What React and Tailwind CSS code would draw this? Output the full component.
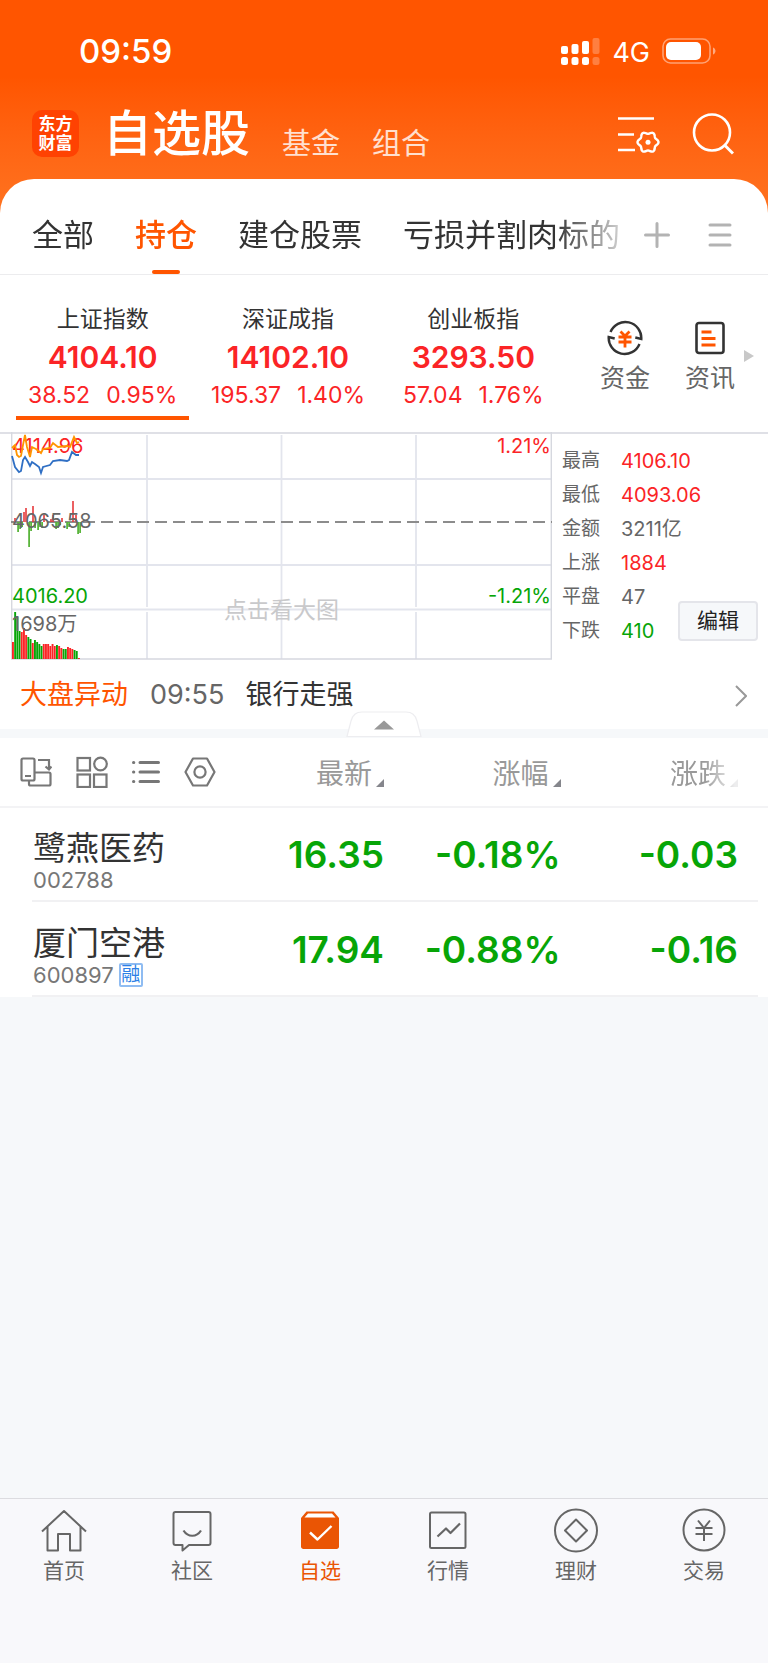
import { useState } from "react";

const indices = [
  { name: "上证指数", value: "4104.10", change: "38.52", percent: "0.95%" },
  { name: "深证成指", value: "14102.10", change: "195.37", percent: "1.40%" },
  { name: "创业板指", value: "3293.50", change: "57.04", percent: "1.76%" },
];

const stats = [
  { label: "最高", value: "4106.10", color: "text-[#fb2426]" },
  { label: "最低", value: "4093.06", color: "text-[#fb2426]" },
  { label: "金额", value: "3211亿", color: "text-[#666]" },
  { label: "上涨", value: "1884", color: "text-[#fb2426]" },
  { label: "平盘", value: "47", color: "text-[#666]" },
  { label: "下跌", value: "410", color: "text-[#07a507]" },
];

const stocks = [
  { name: "鹭燕医药", code: "002788", price: "16.35", percent: "-0.18%", change: "-0.03" },
  { name: "厦门空港", code: "600897", margin: true, price: "17.94", percent: "-0.88%", change: "-0.16" },
];

const groups = ["全部", "持仓", "建仓股票", "亏损并割肉标的"];

// [x, height], drawn up (red) or down (green) from the middle line
const upBars = [[4, 4], [13, 10], [15, 14], [22, 16], [33, 7], [40, 3], [42, 7], [51, 4], [62, 21], [65, 7]];
const downBars = [
  [7, 10], [9, 7], [11, 5], [18, 25], [20, 9], [24, 6], [27, 8], [29, 5],
  [31, 6], [45, 7], [47, 6], [49, 3], [56, 7], [58, 5], [67, 12], [69, 11],
];

const volumes = [
  ["r", 17], ["g", 47], ["g", 42], ["g", 28], ["r", 27], ["r", 31], ["r", 24], ["g", 22],
  ["g", 20], ["r", 16], ["g", 19], ["g", 17], ["g", 15], ["g", 13], ["r", 15], ["r", 15],
  ["r", 15], ["r", 13], ["r", 15], ["r", 13], ["g", 14], ["r", 13], ["r", 11], ["g", 10],
  ["g", 10], ["r", 12], ["r", 11], ["r", 10], ["g", 9], ["g", 8], ["r", 1],
];

/**
 * Builds the outline of the six-lobed gear.
 * @returns A string of polygon points.
 */
const gearPoints = (cx, cy) =>
  Array.from({ length: 72 }, (_, i) => {
    const angle = (i * Math.PI) / 36;
    const radius = 9.4 + 1.1 * Math.cos(6 * angle);
    return `${(cx + radius * Math.cos(angle)).toFixed(2)},${(cy + radius * Math.sin(angle)).toFixed(2)}`;
  }).join(" ");

const StatusBar = () => (
  <div className="flex items-center justify-between h-[102px] pl-[79px] pr-[52px]">
    <span className="text-[33px] leading-10 font-medium">09:59</span>
    <div className="flex items-center gap-3">
      <svg width="39" height="28" viewBox="0 0 39 28" fill="#fff" aria-hidden="true">
        <rect x="0" y="9" width="7" height="8" rx="2" />
        <rect x="10.5" y="7" width="7" height="10" rx="2" />
        <rect x="21" y="4" width="7" height="13" rx="2" />
        <rect x="31.5" y="1" width="7" height="16" rx="2" opacity=".25" />
        <rect x="0" y="20" width="7" height="8" rx="2.5" />
        <rect x="10.5" y="20" width="7" height="8" rx="2.5" />
        <rect x="21" y="20" width="7" height="8" rx="2.5" />
        <rect x="31.5" y="20" width="7" height="8" rx="2.5" opacity=".25" />
      </svg>
      <span className="pt-[3px] text-[27px] leading-8">4G</span>
      <svg width="54" height="26" viewBox="0 0 54 26" fill="none" aria-hidden="true">
        <rect x="1" y="1" width="47" height="24" rx="7.5" stroke="#fff" strokeOpacity=".45" strokeWidth="1.6" />
        <rect x="4" y="4" width="35" height="18" rx="5" fill="#fff" />
        <path d="M51 9.5c1.6.6 2.5 2 2.5 3.5s-.9 2.9-2.5 3.5z" fill="#fff" fillOpacity=".5" />
      </svg>
    </div>
  </div>
);

const Header = () => (
  <div className="flex items-center h-[77px] pl-8 pr-[34px] pb-[14px]">
    <div className="flex flex-col items-center justify-center size-[47px] rounded-[10px] bg-[#ff4202] text-[17px] leading-[19px] font-bold">
      <span>东方</span>
      <span>财富</span>
    </div>
    <nav className="flex items-end ml-6 flex-1">
      <h1 className="text-[49px] leading-[62px] font-medium">自选股</h1>
      <a href="#fund" className="ml-8 text-[29px] leading-[43px] text-white/80">基金</a>
      <a href="#group" className="ml-8 text-[29px] leading-[43px] text-white/80">组合</a>
    </nav>
    <button aria-label="设置" className="mr-8">
      <svg width="43" height="42" viewBox="0 0 43 42" fill="none" stroke="#fff" strokeWidth="2.6">
        <path d="M1 5.500h36M1 21.500h16M1 37h17" />
        <polygon points={gearPoints(31, 29.2)} strokeWidth="2.4" strokeLinejoin="round" />
        <circle cx="31" cy="29.2" r="2.5" fill="#fff" stroke="none" />
      </svg>
    </button>
    <button aria-label="搜索">
      <svg width="42" height="42" viewBox="0 0 42 42" fill="none" stroke="#fff" strokeWidth="2.6">
        <circle cx="20" cy="19.5" r="18" />
        <path d="M32 31.500l9 9" strokeWidth="3" />
      </svg>
    </button>
  </div>
);

const GroupTabs = () => {
  const [active, setActive] = useState("持仓");

  return (
    <div className="flex items-center h-24 pt-[17px] pl-8 pr-9 border-b border-[#ececee]">
      <div className="flex flex-1 min-w-0 gap-[41px] h-full overflow-hidden [mask-image:linear-gradient(to_right,black_86%,transparent)]">
        {groups.map((group) => (
          <button
            key={group}
            onClick={() => setActive(group)}
            className={`relative shrink-0 h-full text-[31px] ${active === group ? "font-medium text-[#ff5500]" : "text-[#333]"}`}
          >
            {group}
            {active === group && (
              <span className="absolute bottom-0 left-1/2 -translate-x-1/2 w-7 h-1 rounded-sm bg-[#ff5500]" />
            )}
          </button>
        ))}
      </div>
      <button aria-label="添加分组" className="ml-1">
        <svg width="26" height="26" viewBox="0 0 26 26" stroke="#b3b3b3" strokeWidth="3" strokeLinecap="round">
          <path d="M13 1.500v23M1.500 13h23" />
        </svg>
      </button>
      <button aria-label="分组管理" className="ml-[38px]">
        <svg width="24" height="26" viewBox="0 0 24 26" stroke="#b3b3b3" strokeWidth="3" strokeLinecap="round">
          <path d="M2 3h20M2 13h20M2 23h20" />
        </svg>
      </button>
    </div>
  );
};

const IndexBar = () => (
  <div className="flex pl-[10px] pr-[14px] h-[157px]">
    <div className="flex flex-1">
      {indices.map((item, index) => (
        <button key={item.name} className="relative flex flex-1 flex-col items-center pt-6">
          <span className="text-[23px] leading-10 text-[#333]">{item.name}</span>
          <span className="text-[30px] leading-9 font-semibold text-[#fb2426]">{item.value}</span>
          <span className="flex gap-4 text-[23px] leading-[41px] text-[#fb2426]">
            <span>{item.change}</span>
            <span>{item.percent}</span>
          </span>
          {index === 0 && <span className="absolute bottom-3 inset-x-[6px] h-1 bg-[#ff5500]" />}
        </button>
      ))}
    </div>
    <div className="flex ml-[34px] gap-[35px] pt-[45px]">
      <button className="flex flex-col items-center text-[25px] leading-[44px] text-[#666]">
        <svg width="36" height="36" viewBox="0 0 36 36" fill="none" stroke="#333" strokeWidth="2.4">
          <path d="M3.500 12A16 16 0 0 1 34.300 19l-6-1.500" />
          <path d="M32.500 24A16 16 0 0 1 1.700 17l6 1.500" />
          <path d="M13.500 11.500l4.500 4.500 4.500-4.500M11.500 17h13M11.500 22h13M18 16v11.500" stroke="#ff5500" strokeWidth="2.8" />
        </svg>
        资金
      </button>
      <button className="flex flex-col items-center text-[25px] leading-[44px] text-[#666]">
        <svg width="30" height="36" viewBox="0 0 30 36" fill="none" stroke="#333" strokeWidth="2.6">
          <rect x="1.5" y="3" width="27" height="30" rx="2.5" />
          <path d="M6.500 12h10M6.500 18.500h14M6.500 25h14" stroke="#ff5500" strokeWidth="2.8" />
        </svg>
        资讯
      </button>
    </div>
    <svg className="self-center ml-[9px] mt-1" width="10" height="12" viewBox="0 0 10 12" fill="#c8c8c8" aria-hidden="true">
      <path d="M0 0l10 6-10 6z" />
    </svg>
  </div>
);

const MinuteChart = () => (
  <div className="relative flex-1 ml-[11px] -mt-[2px] h-[228px] text-[20px] leading-6">
    <svg className="absolute inset-0 size-full" viewBox="0 0 541 228" preserveAspectRatio="none" fill="none" aria-hidden="true">
      <g stroke="#e3e5ed" strokeWidth="1.8">
        <path d="M0 47h541M0 133h541M0 177.500h541" />
        <path d="M136 3v172M270.500 3v172M405 3v172M136 180v47M270.500 180v47M405 180v47" />
      </g>
      <path d="M.7 0v227M540.300 0v227M0 227h541" stroke="#d6d8df" strokeWidth="1.4" />
      <path d="M0 90h541" stroke="#8c8c8c" strokeWidth="2" strokeDasharray="12 6" />
      {upBars.map(([x, h]) => (
        <rect key={x} x={x - 0.8} y={90 - h} width="1.6" height={h} fill="#e63a3c" />
      ))}
      {downBars.map(([x, h]) => (
        <rect key={x} x={x - 0.8} y="90" width="1.8" height={h} fill="#5ab53c" />
      ))}
      {volumes.map(([side, h], index) => (
        <rect
          key={index}
          x={1 + index * 2.2}
          y={227 - h}
          width="1.9"
          height={h}
          fill={side === "r" ? "#fb2426" : "#07a507"}
        />
      ))}
    </svg>
    <span className="absolute left-px top-[2px] text-[#fb2426]">4114.96</span>
    <span className="absolute left-px top-[77px] text-[#666]">4065.58</span>
    <span className="absolute left-px top-[152px] text-[#07a507]">4016.20</span>
    <span className="absolute left-px top-[180px] text-[#666]">1698万</span>
    <span className="absolute right-px top-[2px] text-[#fb2426]">1.21%</span>
    <span className="absolute right-px top-[152px] text-[#07a507]">-1.21%</span>
    <span className="absolute inset-x-0 top-[166px] text-center text-[23px] text-[#c9c9cb]">点击看大图</span>
    <svg className="absolute inset-0 size-full" viewBox="0 0 541 228" preserveAspectRatio="none" fill="none" aria-hidden="true">
      <polyline
        points="1,16 4,13 6,23 8,25 10,24 12,13 14,3 16,15 19,25 21,15 25,17 30,21 32,17 39,16 42,11 47,15 56,14 59,15 63,5 66,11 68,10"
        stroke="#ff9500"
        strokeWidth="1.8"
      />
      <polyline
        points="1,24 4,35 8,40 10,39 12,28 14,25 17,30 19,34 21,30 24,32 28,35 30,41 32,35 39,33 42,29 49,28 56,29 58,28 61,20 65,23 68,23"
        stroke="#2f6fc4"
        strokeWidth="1.8"
      />
    </svg>
  </div>
);

const MarketPanel = () => (
  <div className="flex border-t-2 border-[#dfe0e6]">
    <MinuteChart />
    <div className="relative w-[216px] pl-[10px] pt-[10px]">
      <dl className="text-[20px] leading-[34px]">
        {stats.map((item) => (
          <div key={item.label} className="flex">
            <dt className="w-[59px] text-[19px] text-[#666]">{item.label}</dt>
            <dd className={item.color}>{item.value}</dd>
          </div>
        ))}
      </dl>
      <button className="absolute right-[10px] bottom-[19px] w-20 h-10 rounded border-2 border-[#e4e5ea] bg-[#f6f8fa] text-[21px] text-[#222]">
        编辑
      </button>
    </div>
  </div>
);

const NewsBar = () => (
  <div className="relative border-b-[9px] border-[#f6f8fa]">
    <a href="#news" className="flex items-center h-[69px] pt-[2px] pl-5 pr-[21px] text-[27px] text-[#333]">
      <span className="text-[#ff5500]">大盘异动</span>
      <span className="ml-[22px] text-[#666]">09:55</span>
      <span className="ml-[21px] flex-1">银行走强</span>
      <svg width="12" height="22" viewBox="0 0 12 22" fill="none" stroke="#999" strokeWidth="2" aria-hidden="true">
        <path d="M1 1l10 10L1 21" />
      </svg>
    </a>
    <button aria-label="收起" className="absolute left-1/2 -translate-x-1/2 -bottom-2">
      <svg width="76" height="26" viewBox="0 0 76 26">
        <path d="M1 25.500L5 10C6.500 4 10 1 16 1h44c6 0 9.500 3 11 9l4 15.500z" fill="#fff" stroke="#ededf0" strokeWidth="1.2" />
        <path d="M28 18.500l10-9 10 9z" fill="#999" />
      </svg>
    </button>
  </div>
);

const SortHeader = ({ children, faded }) => (
  <button className={`inline-flex items-end pt-1 text-[28px] leading-10 font-normal text-[#999] ${faded ? "[mask-image:linear-gradient(to_right,black_50%,rgb(0_0_0/0.15)_95%)]" : ""}`}>
    {children}
    <svg className="ml-1 mb-[7px]" width="8" height="8" viewBox="0 0 8 8" fill="#85868c" aria-hidden="true">
      <path d="M8 0v8H0z" />
    </svg>
  </button>
);

const StockTable = () => (
  <table className="w-full table-fixed bg-white">
    <colgroup>
      <col className="w-[31%]" />
      <col className="w-[19%]" />
      <col className="w-[23%]" />
      <col className="w-[27%]" />
    </colgroup>
    <thead>
      <tr className="h-[69px] border-b-2 border-[#f3f3f5] text-right">
        <th className="text-left">
          <div className="flex items-center gap-6 pl-5">
            <button aria-label="横屏">
              <svg width="32" height="30" viewBox="0 0 32 30" fill="none" stroke="#777" strokeWidth="2.2">
                <rect x="1.5" y="1.5" width="13" height="22" rx="1.5" />
                <path d="M9 24v3c0 1 .6 1.500 1.500 1.500H29c1 0 1.500-.5 1.500-1.500V17c0-1-.5-1.500-1.500-1.500H15M5 19h6M18 3h11v9" />
                <path d="M25.500 9.500l3.500 3 2.500-3" />
              </svg>
            </button>
            <button aria-label="宫格">
              <svg width="32" height="32" viewBox="0 0 32 32" fill="none" stroke="#777" strokeWidth="2.2">
                <rect x="1.5" y="2" width="12.5" height="12.5" />
                <circle cx="24.5" cy="8" r="6.3" />
                <rect x="1.5" y="18.5" width="12.5" height="12.5" />
                <rect x="18" y="18.5" width="12.5" height="12.5" />
              </svg>
            </button>
            <button aria-label="列表">
              <svg width="28" height="26" viewBox="0 0 28 26" fill="none" stroke="#777" strokeWidth="3" strokeLinecap="round">
                <path d="M1.500 3.500h.3M1.500 13h.3M1.500 22.500h.3M8 3.500h18.500M8 13h18.500M8 22.500h18.500" />
              </svg>
            </button>
            <button aria-label="表头设置">
              <svg width="32" height="30" viewBox="0 0 32 30" fill="none" stroke="#777" strokeWidth="2.2" strokeLinejoin="round">
                <path d="M9 1.500h14L30.500 15 23 28.500H9L1.500 15z" />
                <circle cx="16" cy="15" r="5.6" />
              </svg>
            </button>
          </div>
        </th>
        <th><SortHeader>最新</SortHeader></th>
        <th><SortHeader>涨幅</SortHeader></th>
        <th className="pr-[30px]"><SortHeader faded>涨跌</SortHeader></th>
      </tr>
    </thead>
    <tbody>
      {stocks.map((stock) => (
        <tr
          key={stock.code}
          className="relative h-[95px] text-right text-[37px] font-semibold text-[#07a507] after:absolute after:left-8 after:right-[10px] after:bottom-0 after:h-[2px] after:bg-[#f1f1f3]"
        >
          <td className="pl-[33px] pt-[10px] text-left font-normal whitespace-nowrap">
            <div className="text-[33px] leading-10 text-[#333]">{stock.name}</div>
            <div className="flex items-center gap-[5px] text-[22px] leading-6 text-[#777]">
              {stock.code}
              {stock.margin && (
                <span className="flex items-center justify-center size-6 border-2 border-[#8fbcf2] rounded-xs text-[19px] text-[#2d7fe6]">
                  融
                </span>
              )}
            </div>
          </td>
          <td>{stock.price}</td>
          <td>{stock.percent}</td>
          <td className="pr-[30px]">{stock.change}</td>
        </tr>
      ))}
    </tbody>
  </table>
);

const navItems = [
  {
    label: "首页",
    icon: <path d="M1 23.500L23 3l22 20.500M6.500 19v23.500H17V26h12v16.500h10.500V19" />,
  },
  {
    label: "社区",
    icon: (
      <>
        <path d="M6.500 4h33c1 0 2 1 2 2v29c0 1-1 2-2 2H20l-6.500 5.500V37h-7c-1 0-2-1-2-2V6c0-1 1-2 2-2z" />
        <path d="M14.500 22.500c4.500 7 13 7 17.500 0" strokeWidth="2.2" />
      </>
    ),
  },
  {
    label: "自选",
    active: true,
    icon: (
      <>
        <path d="M9.500 3.500h27L42 10v28.500c0 1.500-1 2.500-2.500 2.500h-33C5 41 4 40 4 38.500V10z" fill="#ea5504" stroke="none" />
        <path d="M11 5.500h24l3.500 4h-31z" fill="#fff" stroke="none" />
        <path d="M13 24.500l7.500 7L34.500 18" stroke="#fff" strokeWidth="2.4" />
      </>
    ),
  },
  {
    label: "行情",
    icon: (
      <>
        <rect x="5" y="4.5" width="35.5" height="35.5" rx="1.5" />
        <path d="M12.500 28.500l8.500-8 4.500 4.500 9.500-9.500" strokeWidth="2.2" />
      </>
    ),
  },
  {
    label: "理财",
    icon: (
      <>
        <circle cx="23" cy="22.5" r="21" />
        <path d="M23 11.500l11 11-11 11-11-11z" />
      </>
    ),
  },
  {
    label: "交易",
    icon: (
      <>
        <circle cx="23" cy="22" r="20.5" />
        <path d="M17 12.500l6 7.500 6-7.500M14.500 20h17M14.500 26h17M23 20v13" />
      </>
    ),
  },
];

const BottomNav = () => (
  <nav className="grid grid-cols-6 h-[165px] pt-[9px] border-t border-[#dcdce0] bg-[#f8f8fb] content-start">
    {navItems.map((item) => (
      <a
        key={item.label}
        href={`#${item.label}`}
        className={`flex flex-col items-center text-[21px] leading-[34px] ${item.active ? "text-[#ea5504]" : "text-[#666]"}`}
      >
        <svg width="46" height="46" viewBox="0 0 46 46" fill="none" stroke="#666" strokeWidth="2" strokeLinejoin="round" aria-hidden="true">
          {item.icon}
        </svg>
        {item.label}
      </a>
    ))}
  </nav>
);

export default function App() {
  return (
    <div className="flex flex-col min-h-screen bg-[#f6f8fa] font-['Inter','Noto_Sans_CJK_SC',sans-serif]">
      <header className="bg-linear-to-b from-[#ff5500] from-35% to-[#ff7420] text-white pb-10">
        <StatusBar />
        <Header />
      </header>
      <main className="flex-1 -mt-10">
        <div className="rounded-t-[34px] bg-white">
          <GroupTabs />
          <IndexBar />
          <MarketPanel />
          <NewsBar />
        </div>
        <StockTable />
      </main>
      <BottomNav />
    </div>
  );
}
